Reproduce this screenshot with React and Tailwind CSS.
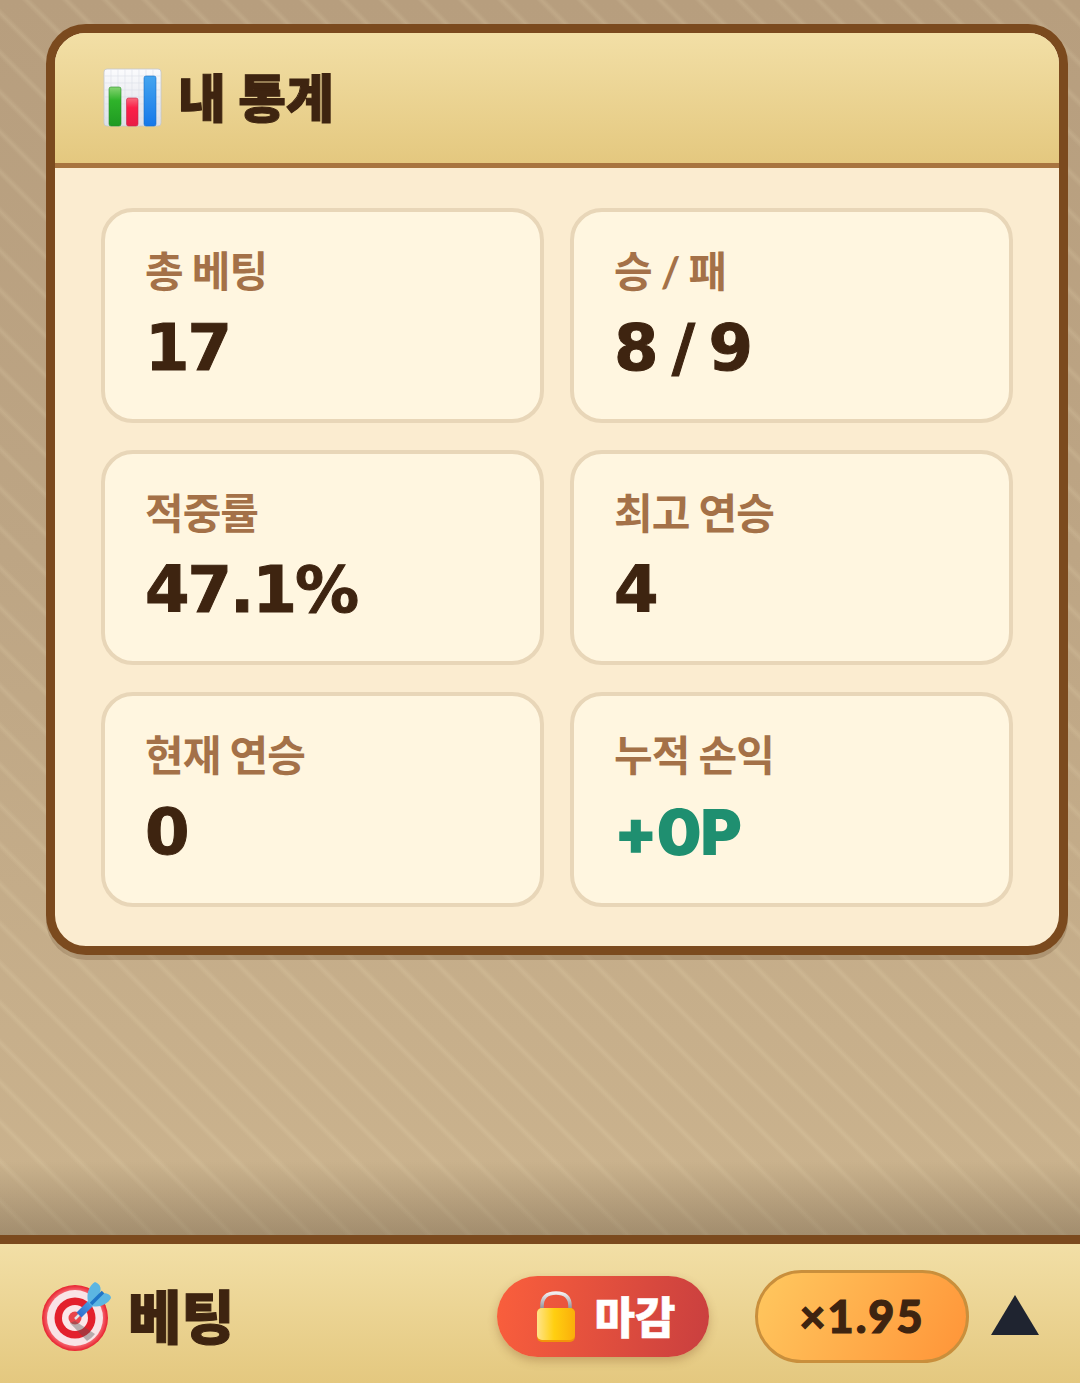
function Chart() {
  return (
    <svg width="60" height="60" viewBox="0 0 60 60" className="shrink-0">
      <defs>
        <linearGradient id="cbg" x1="0" y1="0" x2="0" y2="1"><stop offset="0" stopColor="#fbfbfd"/><stop offset="1" stopColor="#dcdfe7"/></linearGradient>
        <linearGradient id="cg" x1="0" y1="0" x2="0" y2="1"><stop offset="0" stopColor="#86d472"/><stop offset="0.35" stopColor="#2fb32a"/><stop offset="1" stopColor="#1f9a22"/></linearGradient>
        <linearGradient id="cr" x1="0" y1="0" x2="0" y2="1"><stop offset="0" stopColor="#f76a7c"/><stop offset="0.35" stopColor="#fb2048"/><stop offset="1" stopColor="#e81c45"/></linearGradient>
        <linearGradient id="cb" x1="0" y1="0" x2="0" y2="1"><stop offset="0" stopColor="#45a5ef"/><stop offset="1" stopColor="#1578ea"/></linearGradient>
      </defs>
      <rect x="2" y="1" width="57" height="57" rx="3" fill="url(#cbg)" stroke="#c4c6cc" strokeWidth="0.8"/>
      <path d="M9 1V58M16 1V58M23 1V58M30 1V58M37 1V58M44 1V58M51 1V58M2 8H59M2 15H59M2 22H59M2 29H59M2 36H59M2 43H59M2 50H59" stroke="#dcdfe8" strokeWidth="0.6"/>
      <rect x="7" y="19" width="12" height="39" rx="2" fill="url(#cg)" stroke="#2a8f2a" strokeWidth="0.6"/>
      <rect x="24.500" y="30" width="11.500" height="28" rx="2" fill="url(#cr)" stroke="#c8284a" strokeWidth="0.6"/>
      <rect x="42" y="8" width="12" height="50" rx="2" fill="url(#cb)" stroke="#1a70c8" strokeWidth="0.6"/>
    </svg>
  );
}
function Dart() {
  return (
    <svg width="72" height="70" viewBox="0 0 72 70" className="shrink-0">
      <defs>
        <linearGradient id="db" x1="0" y1="1" x2="1" y2="0"><stop offset="0" stopColor="#2f6fd0"/><stop offset="1" stopColor="#5bb4e6"/></linearGradient>
        <radialGradient id="rr" cx="0.5" cy="0.5" r="0.5"><stop offset="0.85" stopColor="#f4606a"/><stop offset="1" stopColor="#e8222e"/></radialGradient>
      </defs>
      <circle cx="35" cy="36" r="33" fill="url(#rr)"/>
      <circle cx="35" cy="36" r="28" fill="#f9e3e6"/>
      <circle cx="35" cy="36" r="20.500" fill="#e3202c"/>
      <circle cx="35" cy="36" r="13" fill="#fbe6e8"/>
      <circle cx="35" cy="36" r="6.500" fill="#e8454c"/>
      <path d="M35 39L55 52A27 27 0 0 1 47 59L30 41Z" fill="#555" opacity="0.4"/>
      <path d="M35 37L44 28" stroke="#dfe3ea" strokeWidth="2.500"/>
      <path d="M39 33L58 14" stroke="url(#db)" strokeWidth="7"/>
      <path d="M48 20C46 10 50 3 55 0C61 2 62 8 59 12C65 10 71 12 71 16C68 22 60 26 52 24Z" fill="#5cb6e2"/>
      <path d="M51 22L63 10" stroke="#1f75c8" strokeWidth="3.500"/>
    </svg>
  );
}
function Lock() {
  return (
    <svg width="42" height="51" viewBox="0 0 42 51" className="shrink-0">
      <defs>
        <linearGradient id="lb" x1="0" y1="0" x2="1" y2="0"><stop offset="0" stopColor="#ffe48a"/><stop offset="0.45" stopColor="#ffcf10"/><stop offset="1" stopColor="#fbae0a"/></linearGradient>
        <linearGradient id="ls" x1="0" y1="0" x2="0" y2="1"><stop offset="0" stopColor="#f1eef0"/><stop offset="1" stopColor="#80848f"/></linearGradient>
      </defs>
      <path d="M7 20V15C7 6 12 2 21 2C30 2 35 6 35 15V20" fill="none" stroke="url(#ls)" strokeWidth="3.500"/>
      <rect x="2" y="17" width="38" height="34" rx="5" fill="#f2940a"/>
      <rect x="2" y="17" width="38" height="32" rx="5" fill="url(#lb)"/>
    </svg>
  );
}
function Stat({ label, value, green }) {
  return (
    <div className="flex h-[215px] flex-col rounded-[32px] border-4 border-[#e8d6b8] bg-[#fff6e0] pl-[40px] pt-[34px]">
      <div className="h-[50px] text-[42px] leading-[50px] font-bold tracking-[-1px] text-[#a47148]">{label}</div>
      {green ? (
        <div className="mt-[15px] font-['Inter',sans-serif] text-[63px] leading-[74px] font-black tracking-[-1px] text-[#1f8f70]">{value}</div>
      ) : (
        <div className="mt-[15px] font-['DejaVu_Sans',sans-serif] text-[64px] leading-[74px] font-bold tracking-[-2px] [word-spacing:-5px] text-[#3e2410] [-webkit-text-stroke:1px_#3e2410]">{value}</div>
      )}
    </div>
  );
}
export default function App() {
  const stats = [
    ["총 베팅", "17"], ["승 / 패", "8 / 9"],
    ["적중률", "47.1%"], ["최고 연승", "4"],
    ["현재 연승", "0"], ["누적 손익", "+0P", true],
  ];
  return (
    <div className="flex h-[1383px] w-[1080px] flex-col overflow-hidden font-['Lato','Noto_Sans_CJK_KR',sans-serif] bg-[linear-gradient(180deg,#b79e7e_0%,#bda584_40%,#caB28d_85%,#c8b08c_100%)]">
      <div className="relative flex-1 bg-[repeating-linear-gradient(45deg,rgba(255,240,200,0)_0px,rgba(255,240,200,0)_20px,rgba(255,240,200,0.13)_24px,rgba(255,240,200,0)_28px)]">
        <div className="h-full pl-[46px] pr-[12px] pt-[24px] bg-[linear-gradient(180deg,rgba(80,65,45,0)_94%,rgba(80,65,45,0.32)_100%)]">
          <div className="overflow-hidden rounded-[40px] border-[9px] border-[#7b4a1e] bg-[#fbecd0] shadow-[0_5px_0_rgba(90,60,30,0.22)]">
            <div className="flex h-[135px] items-center gap-[16px] border-b-[5px] border-[#a8743f] bg-[linear-gradient(180deg,#f2dfa6,#e4c87f)] pl-[47px]">
              <Chart />
              <span className="text-[52px] font-black leading-none tracking-[0px] text-[#3e2410] [-webkit-text-stroke:1px_#3e2410]">내 통계</span>
            </div>
            <div className="grid grid-cols-2 gap-x-[26px] gap-y-[27px] px-[46px] pb-[39px] pt-[40px]">
              {stats.map(([l, v, g]) => <Stat key={l} label={l} value={v} green={g} />)}
            </div>
          </div>
        </div>
      </div>
      <div className="flex h-[148px] items-center border-t-[9px] border-[#7b4a1e] bg-[linear-gradient(180deg,#f2dfa6,#e4c87f)] pl-[40px] pr-[40px] pt-[6px]">
        <Dart />
        <span className="ml-[16px] text-[58px] font-black leading-none text-[#3e2410] [-webkit-text-stroke:1px_#3e2410]">베팅</span>
        <div className="ml-auto flex h-[81px] w-[212px] items-center justify-center gap-[18px] rounded-full bg-[linear-gradient(100deg,#fa5f3c,#c93f3f)] pl-[4px] shadow-[0_4px_10px_rgba(120,70,30,0.3)]">
          <Lock />
          <span className="text-[44px] font-black leading-none text-white [-webkit-text-stroke:0.5px_#ffffff]">마감</span>
        </div>
        <div className="ml-[46px] flex h-[93px] w-[214px] items-center justify-center rounded-full border-[3px] border-[#c98f3c] bg-[linear-gradient(120deg,#ffc85f,#ff9438)] text-[45px] font-black tracking-[2px] text-[#3e2410] [-webkit-text-stroke:1.2px_#3e2410]">×1.95</div>
        <svg width="50" height="40" viewBox="0 0 50 40" className="mb-[4px] ml-[21px] shrink-0"><path d="M25 0L49 40H1Z" fill="#1f2430"/></svg>
      </div>
    </div>
  );
}
